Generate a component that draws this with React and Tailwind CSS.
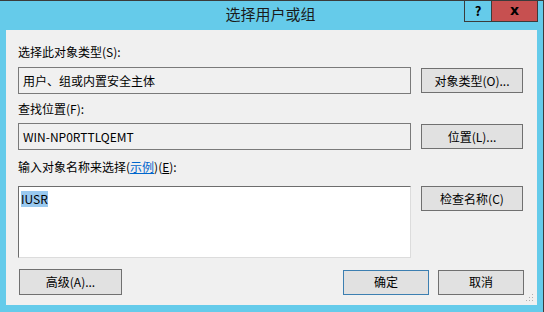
const font = { fontFamily: '"Microsoft YaHei", "Noto Sans CJK SC", sans-serif' }

function Button({ children, className = '', primary }) {
  return (
    <button
      className={`h-[25px] bg-[#e1e1e1] border text-[12px] leading-none text-black flex items-center justify-center ${primary ? 'border-[#3c7fb1]' : 'border-[#707070]'} ${className}`}
    >
      {children}
    </button>
  )
}

export default function App() {
  return (
    <div className="w-[544px] h-[312px] bg-[#65cbea] border-t border-r border-[#3b3b3b] flex flex-col overflow-hidden" style={font}>
      {/* Title bar */}
      <div className="relative h-[29px] shrink-0 flex items-center justify-center">
        <span className="text-[15px] text-[#1b1b1b] -mt-[2px] ml-[-2px]">选择用户或组</span>
        <div className="absolute right-[5px] top-[-1px] flex h-[22px] border border-[#3b3b3b]">
          <div className="w-[27px] flex items-center justify-center border-r border-[#3b3b3b] text-[13px] font-bold text-black">?</div>
          <div className="w-[45px] bg-[#c75050] flex items-center justify-center text-[14px] font-bold leading-none text-black pb-[2px]" style={{ fontFamily: '"DejaVu Sans", sans-serif' }}>x</div>
        </div>
      </div>

      {/* Client area */}
      <div className="relative ml-[6px] w-[531px] h-[275px] bg-[#f0f0f0] pl-[12px] pr-[13px] pt-[14px] text-[12px] text-black">
        <div className="h-4 leading-4">选择此对象类型(S):</div>
        <div className="mt-[7px] flex items-center">
          <div className="w-[393px] h-[27px] border border-[#7a7a7a] bg-[#f0f0f0] pl-[4px] leading-[25px]">用户、组或内置安全主体</div>
          <Button className="ml-[10px] w-[102px]">对象类型(O)...</Button>
        </div>

        <div className="mt-[7px] h-4 leading-4">查找位置(F):</div>
        <div className="mt-[6px] flex items-center">
          <div className="w-[393px] h-[27px] border border-[#7a7a7a] bg-[#f0f0f0] pl-[4px] leading-[25px]">WIN-NP0RTTLQEMT</div>
          <Button className="ml-[10px] w-[102px]">位置(L)...</Button>
        </div>

        <div className="mt-[9px] h-4 leading-4">
          输入对象名称来选择(<span className="text-[#0066cc] underline">示例</span>)(<span className="underline">E</span>):
        </div>
        <div className="mt-[11px] flex items-start">
          <div className="w-[393px] h-[72px] border border-t-[#6d6d6d] border-l-[#6d6d6d] border-r-[#dcdcdc] border-b-[#dcdcdc] bg-white pl-[2px] pt-[3px]">
            <span className="bg-[#99c9ef] leading-4 inline-block">IUSR</span>
          </div>
          <Button className="ml-[10px] w-[102px]">检查名称(C)</Button>
        </div>

        <div className="mt-[11px] flex items-center">
          <Button className="ml-[1px] w-[103px] h-[26px]">高级(A)...</Button>
          <Button primary className="ml-auto w-[86px]">确定</Button>
          <Button className="ml-[9px] w-[86px]">取消</Button>
        </div>

        {/* resize grip */}
        <svg className="absolute right-[3px] bottom-[3px]" width="8" height="8" viewBox="0 0 8 8">
          <rect x="6" y="0" width="1" height="1" fill="#b0b0b0" />
          <rect x="3" y="3" width="1" height="1" fill="#b0b0b0" />
          <rect x="6" y="3" width="1" height="1" fill="#b0b0b0" />
          <rect x="0" y="6" width="1" height="1" fill="#b0b0b0" />
          <rect x="3" y="6" width="1" height="1" fill="#b0b0b0" />
          <rect x="6" y="6" width="1" height="1" fill="#b0b0b0" />
        </svg>
      </div>
    </div>
  )
}
